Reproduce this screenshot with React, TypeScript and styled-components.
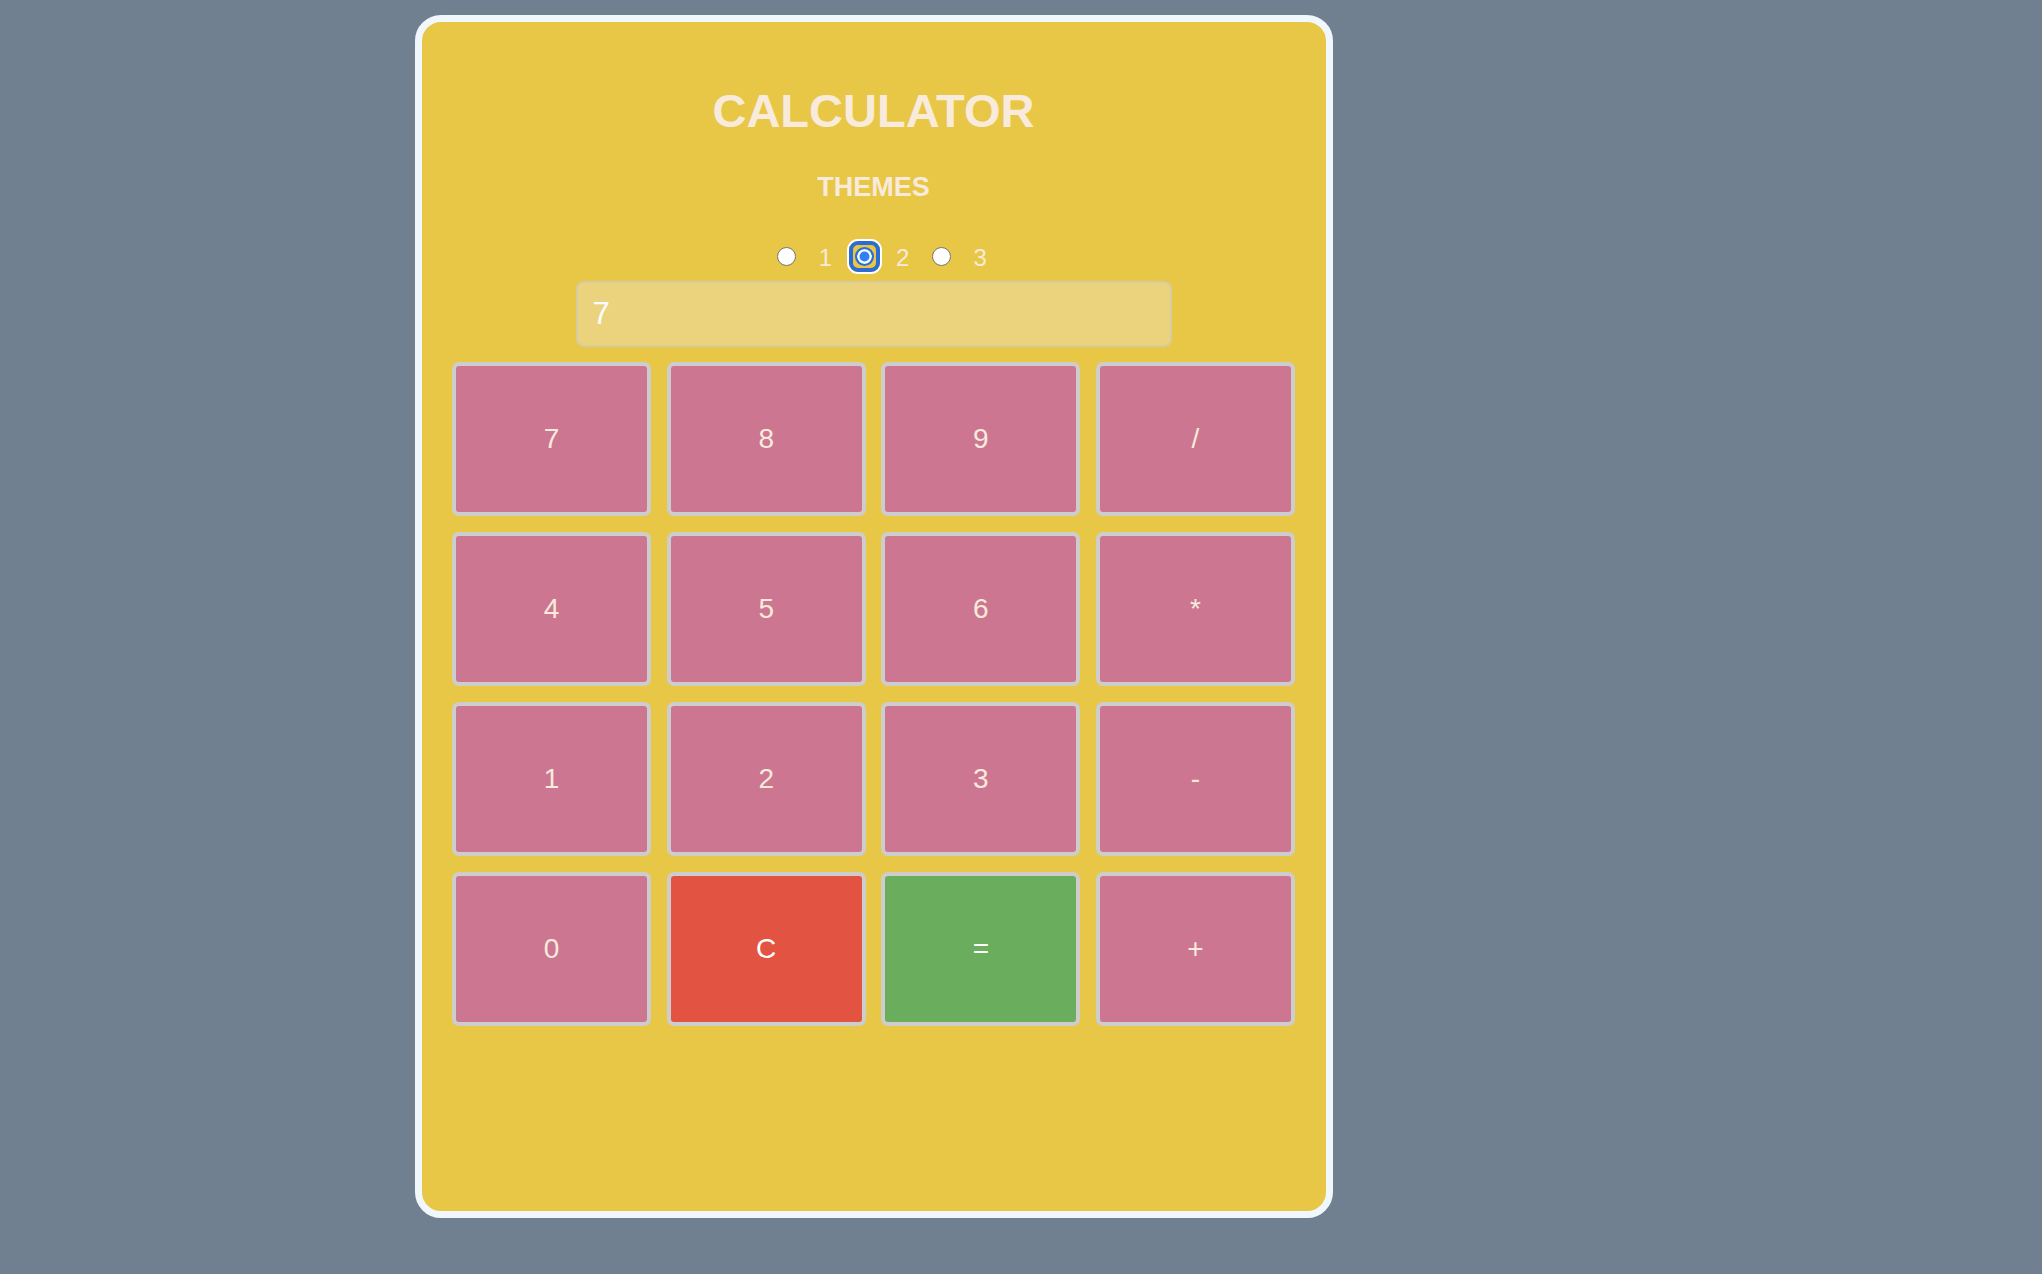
import styled, { createGlobalStyle } from "styled-components";

const GlobalStyle = createGlobalStyle`
  * { box-sizing: border-box; }
  body {
    margin: 0;
    background: #718090;
    font-family: "Liberation Sans", Arial, sans-serif;
  }
`

const keys: { label: string; bg?: string; color?: string }[] = [
  { label: "7" }, { label: "8" }, { label: "9" }, { label: "/" },
  { label: "4" }, { label: "5" }, { label: "6" }, { label: "*" },
  { label: "1" }, { label: "2" }, { label: "3" }, { label: "-" },
  { label: "0" },
  { label: "C", bg: "#e35342", color: "#ffffff" },
  { label: "=", bg: "#69ad5d", color: "#ffffff" },
  { label: "+" },
]

export default function App() {
  return (
    <>
      <GlobalStyle />
      <Page>
        <Card>
          <Title>CALCULATOR</Title>
          <Subtitle>THEMES</Subtitle>
          <RadioRow>
            <Radio type="radio" name="theme" />
            <RadioLabel>1</RadioLabel>
            <FocusRing>
              <Radio type="radio" name="theme" defaultChecked />
            </FocusRing>
            <RadioLabel>2</RadioLabel>
            <Radio type="radio" name="theme" />
            <RadioLabel>3</RadioLabel>
          </RadioRow>
          <Screen>7</Screen>
          <Keypad>
            {keys.map((k) => (
              <Key key={k.label} $bg={k.bg ?? "#cc7691"} $color={k.color ?? "#f8ebdc"}>
                {k.label}
              </Key>
            ))}
          </Keypad>
        </Card>
      </Page>
    </>
  )
}

const Page = styled.div`
  min-height: 1274px;
  padding: 15px 0 0 415px;
`

const Card = styled.div`
  width: 918px;
  height: 1203px;
  background-color: #e8c646;
  border: 7px solid #f0f7fd;
  border-radius: 26px;
  padding: 65px 31px 0 30px;
  display: flex;
  flex-direction: column;
  align-items: center;
`

const Title = styled.h1`
  margin: 0;
  font-size: 47px;
  line-height: 1;
  font-weight: 700;
  color: #f8ebdc;
`

const Subtitle = styled.h3`
  margin: 40px 0 0;
  font-size: 27px;
  line-height: 1;
  font-weight: 700;
  color: #f8ebdc;
`

const RadioRow = styled.div`
  margin-top: 37px;
  height: 36px;
  display: flex;
  align-items: center;
  justify-content: center;
  gap: 22.5px;
  padding-left: 17px;
`

const Radio = styled.input`
  appearance: none;
  margin: 0;
  width: 19px;
  height: 19px;
  border-radius: 50%;
  background: #ffffff;
  border: 1.5px solid #767676;
  flex-shrink: 0;

  &:checked {
    background: #2f80f4;
    border: 2px solid #2a6fd6;
    box-shadow: inset 0 0 0 2.5px #ffffff;
  }
`

const FocusRing = styled.span`
  display: flex;
  padding: 2px;
  margin: 0 -6px;
  border: 4px solid #2d6dd2;
  border-radius: 9px;
  box-shadow: 0 0 0 2px #ffffff;
`

const RadioLabel = styled.span`
  margin-top: 3px;
  font-size: 24px;
  line-height: 1;
  color: #f8ebdc;
`

const Screen = styled.div`
  margin-top: 7px;
  width: 596px;
  height: 66px;
  display: flex;
  align-items: center;
  padding-left: 15px;
  background-color: #ebd37e;
  border: 2px solid #d6cca2;
  border-radius: 8px;
  font-size: 31px;
  color: #fbfcff;
`

const Keypad = styled.div`
  margin-top: 15px;
  width: 100%;
  display: grid;
  grid-template-columns: repeat(4, 1fr);
  grid-auto-rows: 154px;
  gap: 16px 15.5px;
`

const Key = styled.button<{ $bg: string; $color: string }>`
  background-color: ${({ $bg }) => $bg};
  color: ${({ $color }) => $color};
  border: 4px solid #cdcdcd;
  border-radius: 7px;
  font-family: "Liberation Sans", Arial, sans-serif;
  font-size: 28px;
  padding: 0;
  cursor: pointer;
`
